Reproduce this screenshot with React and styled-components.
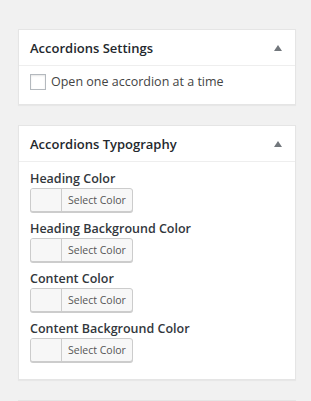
import styled, { createGlobalStyle } from 'styled-components';

const GlobalStyle = createGlobalStyle`
    html, body {
        margin: 0;
        padding: 0;
        background: #f1f1f1;
        font-family: "Open Sans", "Noto Sans", sans-serif;
        color: #23282d;
    }
`
const Page = styled.div`
    display: flex;
    flex-direction: column;
    gap: 20px;
    padding: 29px 15px 0 18px;
    height: 401px;
    box-sizing: border-box;
    overflow: hidden;
`
const Panel = styled.section`
    background: #fff;
    border: 1px solid #e5e5e5;
    box-shadow: 0 1px 1px rgba(0, 0, 0, 0.04);
    flex-shrink: 0;
    min-height: ${props => props.$minHeight || 'auto'};
`
const PanelHeader = styled.header`
    display: flex;
    align-items: center;
    justify-content: space-between;
    height: 35px;
    padding: 0 13px 0 11px;
    border-bottom: 1px solid #eee;
`
const PanelTitle = styled.h2`
    margin: 0;
    font-size: 13px;
    font-weight: 600;
    color: #23282d;
`
const Toggle = styled.span`
    width: 0;
    height: 0;
    border-left: 4px solid transparent;
    border-right: 4px solid transparent;
    border-bottom: 6px solid #72777c;
`
const PanelBody = styled.div`
    padding: ${props => props.$pad || '7px 11px 14px'};
    display: flex;
    flex-direction: column;
`
const CheckRow = styled.label`
    display: flex;
    align-items: center;
    gap: 5px;
    font-size: 12.5px;
    color: #444;
`
const Box = styled.span`
    width: 14px;
    height: 14px;
    border: 1px solid #b4b9be;
    background: #fff;
    box-shadow: inset 0 1px 2px rgba(0, 0, 0, 0.1);
`
const Field = styled.div`
    display: flex;
    flex-direction: column;
    align-items: flex-start;
    margin-bottom: 9px;
    &:last-child {
        margin-bottom: 0;
    }
`
const FieldLabel = styled.span`
    font-size: 12.5px;
    font-weight: 600;
    line-height: 16px;
    color: #32373c;
    margin-bottom: 1px;
`
const ColorButton = styled.button`
    display: flex;
    align-items: stretch;
    height: 24px;
    padding: 0;
    border: 1px solid #ccc;
    border-radius: 3px;
    background: #f7f7f7;
    box-shadow: 0 1px 0 #ccc;
    font-family: inherit;
    cursor: pointer;
`
const Swatch = styled.span`
    width: 30px;
    border-right: 1px solid #ccc;
    background: ${props => props.$color || '#f7f7f7'};
    border-radius: 2px 0 0 2px;
`
const ButtonText = styled.span`
    display: flex;
    align-items: center;
    padding: 0 6px;
    font-size: 10.5px;
    color: #555;
`

const fields = ['Heading Color', 'Heading Background Color', 'Content Color', 'Content Background Color']

function App() {
    return (
        <Page>
            <GlobalStyle />
            <Panel>
                <PanelHeader>
                    <PanelTitle>Accordions Settings</PanelTitle>
                    <Toggle />
                </PanelHeader>
                <PanelBody>
                    <CheckRow>
                        <Box />
                        Open one accordion at a time
                    </CheckRow>
                </PanelBody>
            </Panel>
            <Panel>
                <PanelHeader>
                    <PanelTitle>Accordions Typography</PanelTitle>
                    <Toggle />
                </PanelHeader>
                <PanelBody $pad="9px 11px 17px">
                    {fields.map(f => (
                        <Field key={f}>
                            <FieldLabel>{f}</FieldLabel>
                            <ColorButton type="button">
                                <Swatch />
                                <ButtonText>Select Color</ButtonText>
                            </ColorButton>
                        </Field>
                    ))}
                </PanelBody>
            </Panel>
            <Panel $minHeight="36px" />
        </Page>
    )
}

export default App
